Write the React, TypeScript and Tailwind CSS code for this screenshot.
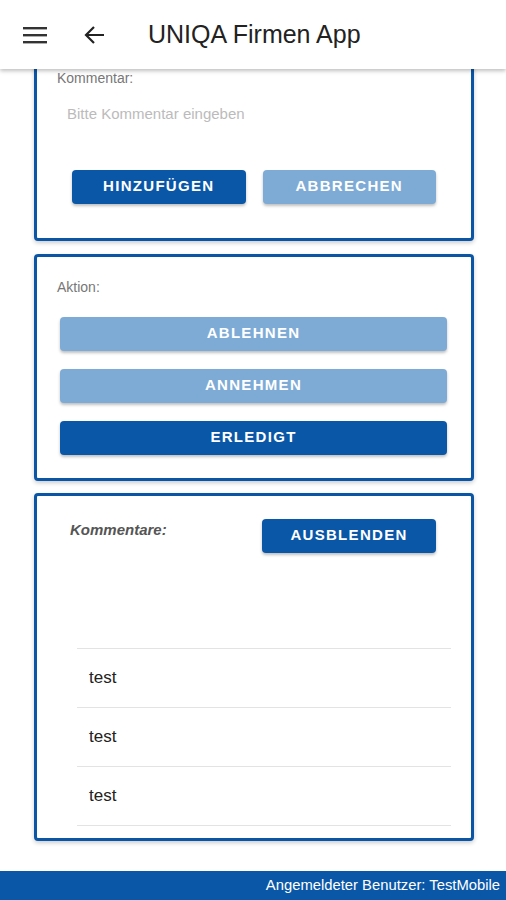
import React from 'react';

const font = { fontFamily: '"Liberation Sans", Arial, sans-serif' };

function PrimaryButton({ label, light, className }: { label: string; light?: boolean; className?: string }) {
  return (
    <button
      className={`h-[34px] rounded-[4px] text-[15px] font-bold tracking-[1.3px] text-white shadow-[0_2px_3px_rgba(0,0,0,0.25)] ${
        light ? 'bg-[#7eabd5]' : 'bg-[#0a57a8]'
      } ${className ?? ''}`}
    >
      {label}
    </button>
  );
}

function Card({ children, className }: { children: React.ReactNode; className?: string }) {
  return (
    <div
      className={`ml-[34px] w-[440px] rounded-[4px] border-[3px] border-[#0b55a5] bg-white shadow-[0_2px_4px_rgba(0,0,0,0.2)] ${className ?? ''}`}
    >
      {children}
    </div>
  );
}

export default function App() {
  const comments = ['test', 'test', 'test'];

  return (
    <div className="flex h-screen flex-col overflow-hidden bg-white" style={font}>
      <header className="relative z-10 flex h-[69px] shrink-0 items-center bg-white shadow-[0_2px_4px_rgba(0,0,0,0.25)]">
        <svg className="ml-[23px]" width="24" height="18" viewBox="0 0 24 18">
          <rect x="0" y="1" width="24" height="2.4" fill="#333" />
          <rect x="0" y="8" width="24" height="2.4" fill="#333" />
          <rect x="0" y="15" width="24" height="2.4" fill="#333" />
        </svg>
        <svg className="ml-[36px]" width="22" height="20" viewBox="0 0 22 20">
          <path d="M21 10H3M11 2L3 10L11 18" fill="none" stroke="#222" strokeWidth="2.2" />
        </svg>
        <h1 className="ml-[43px] text-[25px] text-[#222]">UNIQA Firmen App</h1>
      </header>

      <main className="flex-1">
        <Card className="-mt-[20px] pt-[16px] pb-[34px]">
          <div className="pl-[20px] text-[14px] text-[#777]">Kommentar:</div>
          <div className="mt-[14px] pl-[30px] text-[15px] text-[#bbb]">Bitte Kommentar eingeben</div>
          <div className="mt-[44px] flex gap-[17px] px-[35px]">
            <PrimaryButton label="HINZUFÜGEN" className="flex-1" />
            <PrimaryButton label="ABBRECHEN" light className="flex-1" />
          </div>
        </Card>

        <Card className="mt-[13px] pt-[20px] pb-[23px]">
          <div className="pl-[20px] text-[14px] text-[#777]">Aktion:</div>
          <div className="mt-[19px] flex flex-col gap-[18px] pl-[23px] pr-[24px]">
            <PrimaryButton label="ABLEHNEN" light />
            <PrimaryButton label="ANNEHMEN" light />
            <PrimaryButton label="ERLEDIGT" />
          </div>
        </Card>

        <Card className="mt-[12px] pt-[23px] pb-[12px]">
          <div className="flex items-start pl-[33px] pr-[35px]">
            <div className="text-[15px] font-bold italic text-[#555]">Kommentare:</div>
            <PrimaryButton label="AUSBLENDEN" className="ml-auto w-[174px]" />
          </div>
          <ul className="ml-[40px] mr-[20px] mt-[95px] border-t border-[#e3e3e3]">
            {comments.map((c, i) => (
              <li key={i} className="flex h-[59px] items-center border-b border-[#e3e3e3] pl-[12px] text-[17px] text-[#222]">
                {c}
              </li>
            ))}
          </ul>
        </Card>
      </main>

      <footer className="flex h-[29px] shrink-0 items-center justify-end bg-[#0a57a8] pr-[6px] text-[14.8px] text-white">
        Angemeldeter Benutzer: TestMobile
      </footer>
    </div>
  );
}
